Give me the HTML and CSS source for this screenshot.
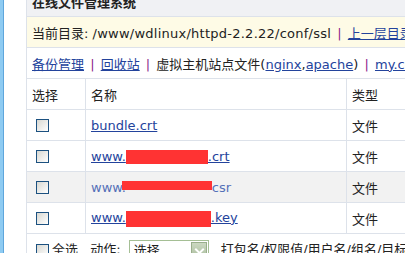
FILE: index.html
```html
<!DOCTYPE html>
<html lang="zh-CN">

<head>
    <meta charset="UTF-8">
    <title>在线文件管理系统</title>
    <link rel="stylesheet" href="styles.css">
</head>

<body>
    <div class="frame">
        <div class="edge"></div>
        <div class="main">
            <table class="files">
                <colgroup>
                    <col class="c-sel">
                    <col class="c-name">
                    <col class="c-type">
                </colgroup>
                <tr class="title">
                    <td colspan="3">在线文件管理系统</td>
                </tr>
                <tr class="path">
                    <td colspan="3">当前目录: <span class="dir">/www/wdlinux/httpd-2.2.22/conf/ssl</span> <span class="sep">|</span> <a href="#">上一层目录</a></td>
                </tr>
                <tr class="tools">
                    <td colspan="3"><a href="#">备份管理</a> <span class="sep">|</span> <a href="#">回收站</a> <span class="sep">|</span> 虚拟主机站点文件(<a href="#">nginx</a>,<a href="#">apache</a>) <span class="sep">|</span> <a href="#">my.conf</a></td>
                </tr>
                <tr class="head">
                    <td>选择</td>
                    <td>名称</td>
                    <td>类型</td>
                </tr>
                <!-- file rows -->
                <tr>
                    <td><input type="checkbox" class="box"></td>
                    <td><a href="#">bundle.crt</a></td>
                    <td>文件</td>
                </tr>
                <tr>
                    <td><input type="checkbox" class="box"></td>
                    <td><a href="#">www.<span class="mask m-crt"></span>.crt</a></td>
                    <td>文件</td>
                </tr>
                <tr class="hover">
                    <td><input type="checkbox" class="box"></td>
                    <td><a href="#">www.<span class="mask m-csr"></span>csr</a></td>
                    <td>文件</td>
                </tr>
                <tr>
                    <td><input type="checkbox" class="box"></td>
                    <td><a href="#">www.<span class="mask m-key"></span>.key</a></td>
                    <td>文件</td>
                </tr>
                <tr class="foot">
                    <td colspan="3">
                        <input type="checkbox" class="box">全选
                        <span class="action">动作:</span>
                        <span class="select">选择<span class="arrow"></span></span>
                        打包名/权限值/用户名/组名/目标文件
                    </td>
                </tr>
            </table>
        </div>
    </div>
</body>

</html>
```

FILE: styles.css
```css
html,
body {
    margin: 0;
    height: 100%;
    overflow: hidden;
    background: #ffffff;
}

body {
    font-family: "DejaVu Sans", "Noto Sans CJK SC", sans-serif;
    font-size: 13px;
    color: #222;
}

.frame {
    display: flex;
    height: 100%;
}

.edge {
    width: 3px;
    flex: none;
    background: #8ecbf2;
    border-right: 1px solid #5fa6dc;
}

.main {
    padding-left: 22px;
    margin-top: -14px;
}

.files {
    border-collapse: separate;
    border-spacing: 0;
    table-layout: fixed;
    width: 540px;
    border-left: 1px solid #dde2ea;
}

.c-sel {
    width: 59px;
}

.c-name {
    width: 261px;
}

.c-type {
    width: 220px;
}

.files td {
    height: 30px;
    padding: 0 5px;
    border-right: 1px solid #dde2ea;
    border-bottom: 1px solid #dde2ea;
    white-space: nowrap;
    overflow: hidden;
    vertical-align: middle;
}

.title td {
    background: #f0f1f4;
    font-weight: bold;
}

.path td {
    background: #fefbe6;
}

.dir {
    letter-spacing: 0.25px;
}

a {
    color: #23439c;
}

.sep {
    color: #8b1a8b;
    margin: 0 2px;
}

.hover td {
    background: #f2f2f2;
}

.hover a {
    color: #5570b8;
    text-decoration: none;
}

.box {
    appearance: none;
    width: 13px;
    height: 13px;
    margin: 3px 3px 3px 4px;
    vertical-align: middle;
    border: 1px solid #1c5180;
    box-sizing: border-box;
    background: linear-gradient(135deg, #d8d8d2, #ffffff);
}

.mask {
    display: inline-block;
    background: #ff3333;
}

.m-crt {
    width: 82px;
    height: 14px;
    vertical-align: -3px;
}

.m-csr {
    width: 90px;
    height: 9px;
    margin-left: -4px;
    vertical-align: 2px;
}

.m-key {
    width: 85px;
    height: 16px;
    vertical-align: -5px;
}

.foot td {
    vertical-align: top;
    padding-top: 5px;
}

.action {
    margin-left: 8px;
}

.select {
    display: inline-block;
    position: relative;
    width: 74px;
    height: 20px;
    line-height: 20px;
    padding-left: 4px;
    margin: 0 8px 0 4px;
    border: 1px solid #a5bf95;
    vertical-align: middle;
}

.arrow {
    position: absolute;
    right: 1px;
    top: 1px;
    width: 16px;
    height: 18px;
    box-sizing: border-box;
    border: 1px solid #9aae8c;
    background: linear-gradient(#cbd8c1, #a9bc9c);
}

.arrow::after {
    content: "";
    position: absolute;
    left: 4px;
    top: 3px;
    width: 5px;
    height: 5px;
    border-right: 2px solid #ffffff;
    border-bottom: 2px solid #ffffff;
    transform: rotate(45deg);
}
```
